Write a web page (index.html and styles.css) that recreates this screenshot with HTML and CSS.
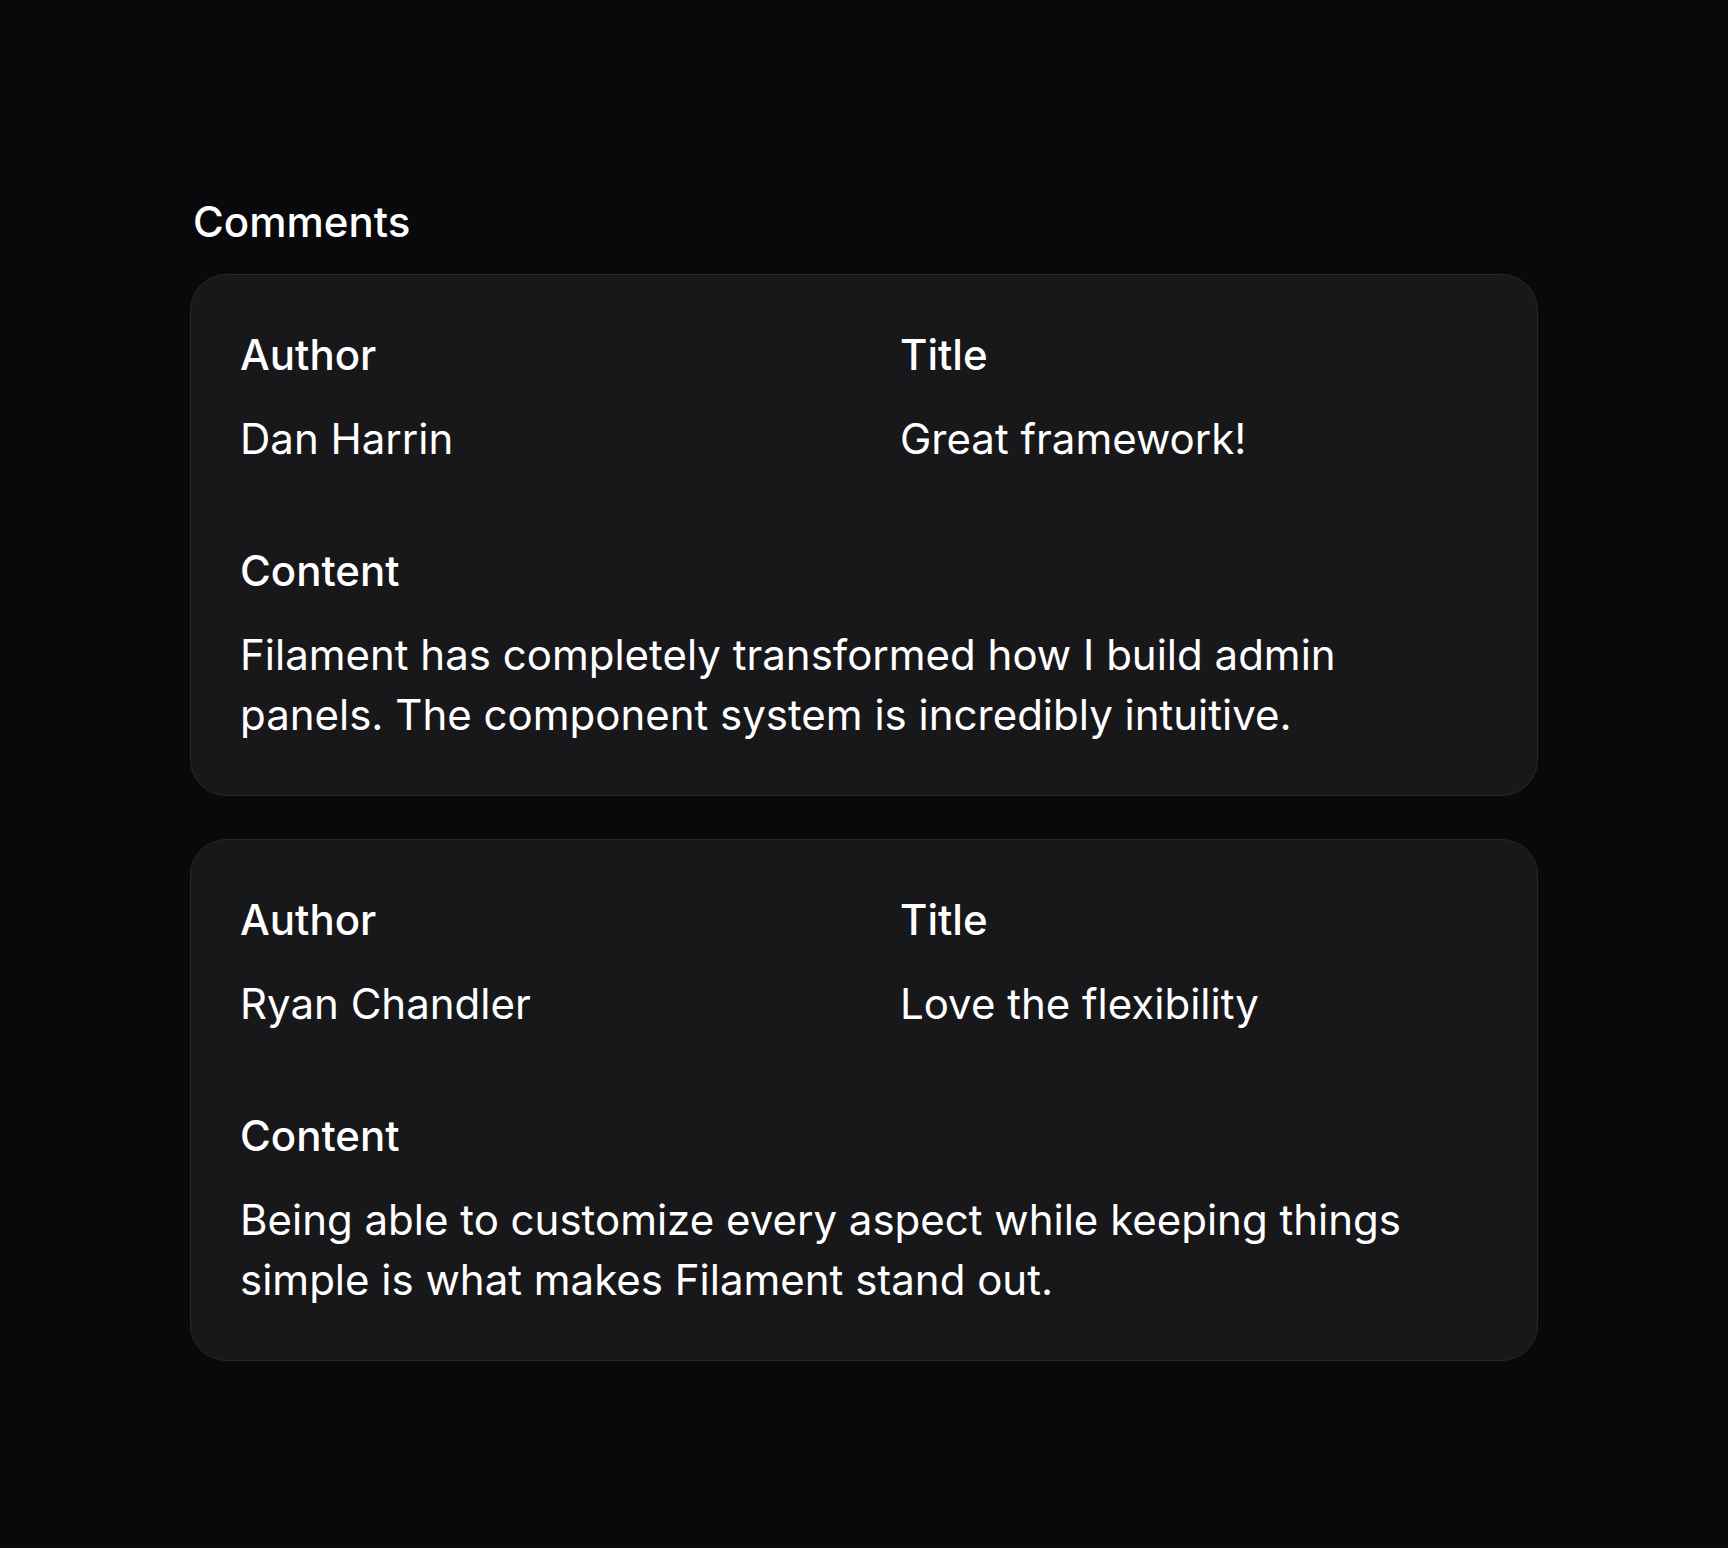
FILE: index.html
```html
<!DOCTYPE html>
<html lang="en">
<head>
<meta charset="utf-8">
<title>Comments</title>
<link rel="stylesheet" href="styles.css">
</head>
<body>
<main class="page">
  <section class="repeatable">
    <div class="repeatable-label">Comments</div>
    <div class="items">
      <article class="item">
        <div class="entry">
          <div class="entry-label">Author</div>
          <div class="entry-value">Dan Harrin</div>
        </div>
        <div class="entry">
          <div class="entry-label">Title</div>
          <div class="entry-value">Great framework!</div>
        </div>
        <div class="entry entry-full">
          <div class="entry-label">Content</div>
          <div class="entry-value">Filament has completely transformed how I build admin panels. The component system is incredibly intuitive.</div>
        </div>
      </article>
      <article class="item">
        <div class="entry">
          <div class="entry-label">Author</div>
          <div class="entry-value">Ryan Chandler</div>
        </div>
        <div class="entry">
          <div class="entry-label">Title</div>
          <div class="entry-value">Love the flexibility</div>
        </div>
        <div class="entry entry-full">
          <div class="entry-label">Content</div>
          <div class="entry-value">Being able to customize every aspect while keeping things simple is what makes Filament stand out.</div>
        </div>
      </article>
    </div>
  </section>
</main>
</body>
</html>
```
FILE: styles.css
```css
html, body {
  margin: 0;
  padding: 0;
  background: #09090b;
  color: #ffffff;
  font-family: Inter, "Noto Sans", "Liberation Sans", sans-serif;
  font-size: 42px;
  line-height: 60px;
}

.page {
  padding: 192px 190px 0 190px;
}

.repeatable {
  display: flex;
  flex-direction: column;
  gap: 22px;
}

.repeatable-label {
  padding-left: 3px;
  font-weight: 500;
}

.items {
  display: flex;
  flex-direction: column;
  gap: 43px;
}

.item {
  display: grid;
  grid-template-columns: 1fr 1fr;
  column-gap: 72px;
  row-gap: 72px;
  padding: 50px 49px 50px 49px;
  background: #18181b;
  border: 1px solid #27272a;
  border-radius: 36px;
}

.entry {
  display: flex;
  flex-direction: column;
  gap: 24px;
}

.entry-full {
  grid-column: span 2;
}

.entry-label {
  font-weight: 500;
  color: #ffffff;
}

.entry-value {
  font-weight: 400;
  color: #ffffff;
}
```
